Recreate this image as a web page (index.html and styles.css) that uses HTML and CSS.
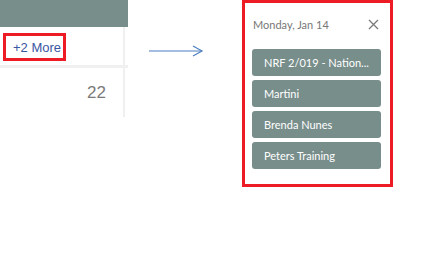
FILE: index.html
```html
<!DOCTYPE html>
<html lang="en">
<head>
  <meta charset="UTF-8" />
  <title>More events popover</title>
  <link rel="stylesheet" href="styles.css">
</head>
<body>
  <!-- Calendar fragment -->
  <div class="cal">
    <div class="cal-head"></div>
    <div class="cal-row first">
      <div class="cal-cell">
        <span class="more">+2 More</span>
      </div>
    </div>
    <div class="cal-row second">
      <div class="cal-cell">
        <span class="day-num">22</span>
      </div>
    </div>
  </div>

  <!-- Arrow -->
  <svg class="arrow" width="56" height="14" viewBox="0 0 56 14">
    <line x1="1" y1="7" x2="54" y2="7" stroke="#4d7fc0" stroke-width="1.2"/>
    <polyline points="45,2 54,7 45,12" fill="none" stroke="#4d7fc0" stroke-width="1.2"/>
  </svg>

  <!-- Popover -->
  <div class="popover">
    <div class="pop-head">
      <span class="pop-date">Monday, Jan 14</span>
      <svg class="close" width="11" height="11" viewBox="0 0 11 11">
        <path d="M1 1 L10 10 M10 1 L1 10" stroke="#7a7a7a" stroke-width="1.3"/>
      </svg>
    </div>
    <div class="events">
      <div class="event">NRF 2/019 - Nation...</div>
      <div class="event">Martini</div>
      <div class="event">Brenda Nunes</div>
      <div class="event">Peters Training</div>
    </div>
  </div>
</body>
</html>
```

FILE: styles.css
```css
* {
  margin: 0;
  padding: 0;
  box-sizing: border-box;
}

body {
  background: #fff;
  display: flex;
  align-items: flex-start;
  font-family: 'Lato', sans-serif;
}

/* Calendar fragment */
.cal {
  width: 128px;
  flex-shrink: 0;
}

.cal-head {
  height: 27px;
  background: #788e8b;
}

.cal-row {
  display: flex;
}

.cal-row.first {
  height: 41px;
  border-bottom: 3px solid #f0f0f0;
}

.cal-row.second {
  height: 49px;
}

.cal-cell {
  width: 125px;
  border-right: 2px solid #f0f0f0;
}

.first .cal-cell {
  padding: 6px 0 0 3px;
}

.more {
  display: inline-flex;
  align-items: center;
  width: 63px;
  height: 28px;
  padding-left: 7px;
  border: 3px solid #ed1c24;
  color: #3a56a2;
  font-family: 'Liberation Sans', Arial, sans-serif;
  font-size: 13px;
}

.second .cal-cell {
  text-align: right;
  padding: 14px 17px 0 0;
}

.day-num {
  color: #7a7a7a;
  font-family: 'Liberation Sans', Arial, sans-serif;
  font-size: 17px;
}

/* Arrow */
.arrow {
  margin: 44px 0 0 20px;
  flex-shrink: 0;
}

/* Popover */
.popover {
  margin-left: 38px;
  width: 151px;
  height: 187px;
  border: 3px solid #ed1c24;
  padding: 0 9px 0 7px;
  flex-shrink: 0;
}

.pop-head {
  display: flex;
  justify-content: space-between;
  align-items: center;
  height: 40px;
  padding: 2px 1px 0 1px;
}

.pop-date {
  color: #777;
  font-size: 11px;
}

.close {
  margin-right: 1px;
}

.events {
  display: flex;
  flex-direction: column;
  gap: 4px;
  margin-top: 6px;
}

.event {
  height: 27px;
  line-height: 27px;
  background: #788e8b;
  border-radius: 3px;
  color: #fff;
  font-size: 11px;
  padding-left: 12px;
  white-space: nowrap;
  overflow: hidden;
}
```
